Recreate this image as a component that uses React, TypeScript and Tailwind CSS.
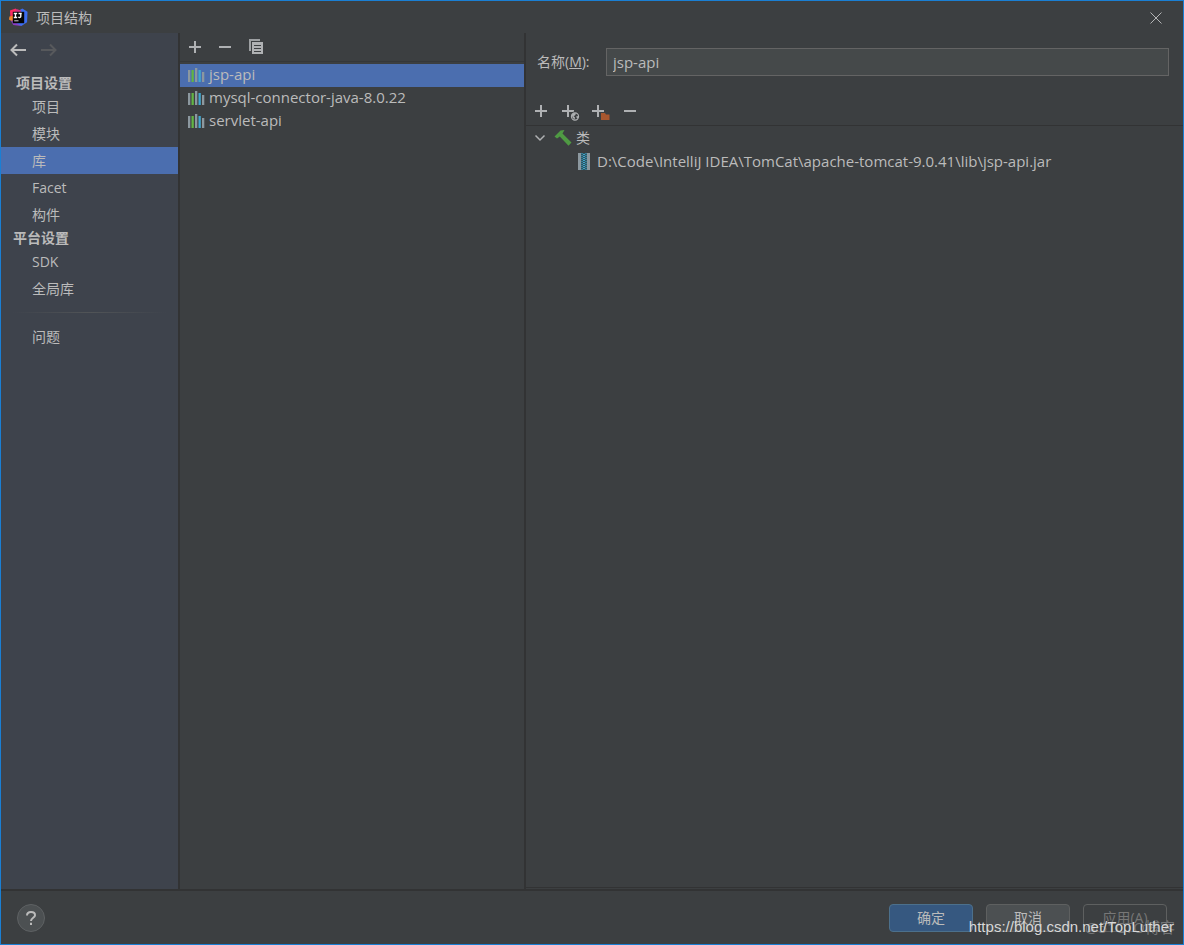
import { useState } from 'react'

const projectItems = ['项目', '模块', '库', 'Facet', '构件']
const platformItems = ['SDK', '全局库']
const libraries = ['jsp-api', 'mysql-connector-java-8.0.22', 'servlet-api']

function AppLogo() {
  return (
    <svg width="19" height="19" viewBox="0 0 20 20" aria-hidden="true">
      <path d="M1 2.5 7 0.5 10 4 6 12 1.5 9.5Z" fill="#fb2d62" />
      <path d="M0.5 9 5 8 7 14 4 14.5 0 12Z" fill="#f58529" />
      <path d="M2 13.5 8 13 13 19 4.5 18Z" fill="#8a3fc4" />
      <path d="M10 3 14 0.5 19.5 4 19 15 13 19 8 16Z" fill="#3c6df0" />
      <path d="M8 1 13 3 11 6 6 5Z" fill="#d6307f" />
      <rect x="4" y="4" width="12" height="12" fill="#050505" />
      <path d="M5 5.8H8.6M6.8 5.8V10M5 10H8.6M10 5.8H13.4M12.4 5.8V9C12.4 10 11 10.3 9.8 9.7" stroke="#fff" strokeWidth="1.4" fill="none" />
      <path d="M5.5 13.5H10" stroke="#ddd" strokeWidth="1" />
    </svg>
  )
}

function ArrowIcon({ flip }: { flip?: boolean }) {
  return (
    <svg width="16" height="16" viewBox="0 0 16 16" fill="none" stroke="currentColor" strokeWidth="2" aria-hidden="true">
      {flip ? <path d="M0 8H14M9 2.5 14.5 8 9 13.5" /> : <path d="M16 8H2M7 2.5 1.5 8 7 13.5" />}
    </svg>
  )
}

function PlusIcon() {
  return (
    <svg width="12" height="12" viewBox="0 0 12 12" aria-hidden="true">
      <path d="M5 0H7V5H12V7H7V12H5V7H0V5H5Z" fill="#afb1b3" />
    </svg>
  )
}

function MinusIcon() {
  return (
    <svg width="12" height="12" viewBox="0 0 12 12" aria-hidden="true">
      <path d="M0 5H12V7H0Z" fill="#afb1b3" />
    </svg>
  )
}

function CopyIcon() {
  return (
    <svg width="15" height="16" viewBox="0 0 15 16" aria-hidden="true">
      <path d="M0 0H11V2H2V12H0Z" fill="#9da0a2" />
      <path d="M3 3H14V15H3Z" fill="#afb1b3" />
      <path d="M5 6.5H12M5 9.5H12M5 12.5H12" stroke="#3c3f41" strokeWidth="1" />
    </svg>
  )
}

function PlusGlobeIcon() {
  return (
    <svg width="18" height="18" viewBox="0 0 18 18" aria-hidden="true">
      <path d="M5 1H7V6H12V8H7V13H5V8H0V6H5Z" fill="#afb1b3" />
      <circle cx="13" cy="12.5" r="5" fill="#3c3f41" />
      <circle cx="13" cy="12.5" r="3.6" fill="none" stroke="#afb1b3" strokeWidth="1.1" />
      <path d="M9.8 10.5 12 9 14 9.5 13 11.5 11.5 12 13 13.5 12.5 15.5 10.5 13.5Z" fill="#afb1b3" />
      <path d="M14 12.5 16.5 12 15.5 15Z" fill="#afb1b3" />
    </svg>
  )
}

function PlusFolderIcon() {
  return (
    <svg width="18" height="18" viewBox="0 0 18 18" aria-hidden="true">
      <path d="M5 1H7V6H12V8H7V13H5V8H0V6H5Z" fill="#afb1b3" />
      <path d="M8 8H18V17H8Z" fill="#3c3f41" />
      <path d="M9 9H13L14 10.5H17.5V16H9Z" fill="#a8572f" />
    </svg>
  )
}

function LibraryIcon() {
  return (
    <svg width="17" height="16" viewBox="0 0 17 16" className="shrink-0" aria-hidden="true">
      <path d="M0 3H2.3V15H0ZM7 1H9.3V15H7ZM14 5H16.3V15H14Z" fill="#8c989f" />
      <path d="M3.5 3H5.8V15H3.5Z" fill="#62b543" />
      <path d="M10.5 3H12.8V15H10.5Z" fill="#40a8cf" />
    </svg>
  )
}

function HammerIcon() {
  return (
    <svg width="18" height="18" viewBox="0 0 18 18" className="shrink-0" aria-hidden="true">
      <path d="M0.5 7.5 6.5 1.5 10.5 1 8.5 4.5 17.5 13.5 14.5 16.8 5.8 7.5 3 9.5Z" fill="#4f9a43" />
    </svg>
  )
}

function ArchiveIcon() {
  return (
    <svg width="12" height="17" viewBox="0 0 12 17" className="shrink-0" aria-hidden="true">
      <path d="M0 0H3V17H0ZM9 0H12V17H9Z" fill="#8c989f" />
      <path d="M3 0H9V17H3Z" fill="#2f5562" />
      <path d="M4 0V17M8 0V17" stroke="#40a8cf" strokeWidth="1" strokeDasharray="1 1" />
      <path d="M6 1V17" stroke="#40a8cf" strokeWidth="2" strokeDasharray="1 1" />
    </svg>
  )
}

export default function App() {
  const [section, setSection] = useState('库')
  const [library, setLibrary] = useState('jsp-api')
  const [name, setName] = useState('jsp-api')
  const [open, setOpen] = useState(true)

  function selectLibrary(item: string) {
    setLibrary(item)
    setName(item)
  }

  function navItem(item: string) {
    return (
      <li key={item}>
        <button
          type="button"
          onClick={() => setSection(item)}
          className={`flex h-[27px] w-full items-center pl-[31px] text-left ${section === item ? 'bg-[#4b6eaf]' : ''}`}
        >
          {item}
        </button>
      </li>
    )
  }

  return (
    <div className="relative flex min-h-screen flex-col border border-[#1a7fd4] bg-[#3c3f41] font-['Open_Sans','Noto_Sans_CJK_SC',sans-serif] text-sm text-[#bbbbbb]">
      <header className="flex h-8 items-center justify-between pl-2 pr-[21px] pt-px">
        <div className="flex items-center gap-2">
          <AppLogo />
          <h1>项目结构</h1>
        </div>
        <button type="button" aria-label="关闭">
          <svg width="12" height="12" viewBox="0 0 12 12" stroke="#b4b5b6" aria-hidden="true">
            <path d="M0.5 0.5 11.5 11.5M11.5 0.5 0.5 11.5" />
          </svg>
        </button>
      </header>

      <main className="flex flex-1 border-b-2 border-[#323334]">
        <nav className="w-[179px] shrink-0 border-r-2 border-[#323334] bg-[#3e434c]">
          <div className="flex h-10 items-start gap-[15px] pl-[9px] pt-[9px]">
            <button type="button" aria-label="后退"><ArrowIcon /></button>
            <button type="button" aria-label="前进" disabled className="text-[#57595c]"><ArrowIcon flip /></button>
          </div>
          <h2 className="h-5 pl-[15px] font-bold">项目设置</h2>
          <ul>{projectItems.map(navItem)}</ul>
          <h2 className="h-5 pl-3 font-bold">平台设置</h2>
          <ul>{platformItems.map(navItem)}</ul>
          <div className="mx-3 my-[10px] h-px bg-linear-to-r from-transparent via-[#515457] to-transparent" />
          <ul>{navItem('问题')}</ul>
        </nav>

        <section className="w-[346px] shrink-0 border-r-2 border-[#323334]">
          <div className="mb-0.5 flex h-[29px] items-center gap-[18px] border-b border-[#353739] pl-[9px]">
            <button type="button" aria-label="添加"><PlusIcon /></button>
            <button type="button" aria-label="移除"><MinusIcon /></button>
            <button type="button" aria-label="复制"><CopyIcon /></button>
          </div>
          <ul className="text-[15px]">
            {libraries.map((item) => (
              <li key={item}>
                <button
                  type="button"
                  onClick={() => selectLibrary(item)}
                  className={`flex h-[23px] w-full items-center gap-1 pb-0.5 pl-2 text-left ${library === item ? 'bg-[#4b6eaf]' : ''}`}
                >
                  <LibraryIcon />
                  {item}
                </button>
              </li>
            ))}
          </ul>
        </section>

        <section className="flex min-w-0 flex-1 flex-col">
          <div className="flex items-center pl-[11px] pr-[14px] pt-[15px]">
            <label htmlFor="library-name" className="w-[69px] shrink-0">
              名称(<u>M</u>):
            </label>
            <input
              id="library-name"
              value={name}
              onChange={(e) => setName(e.target.value)}
              className="h-7 min-w-0 flex-1 border border-[#646464] bg-[#45494a] px-1.5 text-[15px] outline-none"
            />
          </div>
          <div className="mt-5 flex h-[29px] items-center pl-[9px]">
            <button type="button" aria-label="添加" className="w-[27px]"><PlusIcon /></button>
            <button type="button" aria-label="添加网址" className="w-[30px] pt-1"><PlusGlobeIcon /></button>
            <button type="button" aria-label="添加目录" className="w-8 pt-1"><PlusFolderIcon /></button>
            <button type="button" aria-label="移除"><MinusIcon /></button>
          </div>
          <div className="flex-1 border-b border-t border-[#323334]">
            <button type="button" onClick={() => setOpen(!open)} aria-expanded={open} className="flex h-6 w-full items-center pl-2 text-left">
              <svg width="12" height="12" viewBox="0 0 12 12" fill="none" stroke="#afb1b3" strokeWidth="1.5" aria-hidden="true">
                <path d="M1.5 3.5 6 8 10.5 3.5" />
              </svg>
              <span className="flex items-center gap-1 pl-2">
                <HammerIcon />
                类
              </span>
            </button>
            {open && (
              <div className="flex h-[23px] items-center gap-[7px] pl-[52px] text-[15px]">
                <ArchiveIcon />
                <span>{'D:\\Code\\IntelliJ IDEA\\TomCat\\apache-tomcat-9.0.41\\lib\\jsp-api.jar'}</span>
              </div>
            )}
          </div>
          <div className="h-px" />
        </section>
      </main>

      <footer className="flex h-[53px] items-center justify-between px-4">
        <button type="button" aria-label="帮助" className="flex size-7 items-center justify-center rounded-full border border-[#5e6163] bg-[#4c5052]">
          <svg width="12" height="16" viewBox="0 0 12 16" fill="none" stroke="#bbbbbb" strokeWidth="2" aria-hidden="true">
            <path d="M2 5.5C2 3 3.7 2 6 2C8.3 2 10 3.2 10 5.2C10 7.8 6 7.7 6 11M6 12.8V15" />
          </svg>
        </button>
        <div className="flex gap-[13px]">
          <button type="button" className="h-7 w-[84px] rounded border border-[#4c708c] bg-[#365880]">确定</button>
          <button type="button" className="h-7 w-[84px] rounded border border-[#5e6060] bg-[#4c5052]">取消</button>
          <button type="button" disabled className="h-7 w-[84px] rounded border border-[#5e6060] text-[#777777]">应用(A)</button>
        </div>
      </footer>

      {/* watermark over the footer buttons */}
      <div className="pointer-events-none absolute bottom-[7px] right-2 whitespace-nowrap text-[15px] leading-5 text-[#747677]">@51CTO博客</div>
      <div className="pointer-events-none absolute bottom-[7px] right-[9px] whitespace-nowrap font-['Liberation_Sans',sans-serif] text-[15px] leading-5 text-[#d8d8d8]">
        https://blog.csdn.net/TopLuther
      </div>
    </div>
  )
}
